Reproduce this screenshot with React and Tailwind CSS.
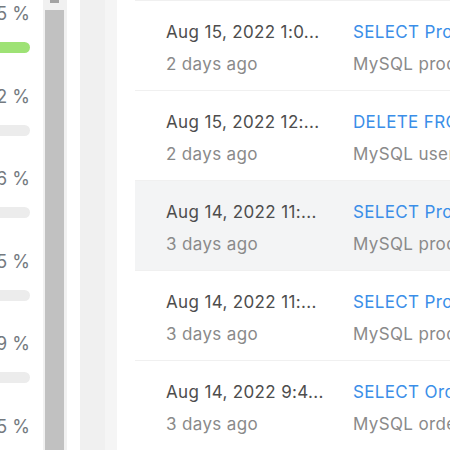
const stats = ['35 %', '42 %', '16 %', '25 %', '19 %', '15 %'];

const logs = [
  { date: 'Aug 15, 2022 1:0...', ago: '2 days ago', sql: 'SELECT Products FROM products', desc: 'MySQL products query' },
  { date: 'Aug 15, 2022 12:...', ago: '2 days ago', sql: 'DELETE FROM users', desc: 'MySQL users query' },
  { date: 'Aug 14, 2022 11:...', ago: '3 days ago', sql: 'SELECT Products FROM products', desc: 'MySQL products query', active: true },
  { date: 'Aug 14, 2022 11:...', ago: '3 days ago', sql: 'SELECT Products FROM products', desc: 'MySQL products query' },
  { date: 'Aug 14, 2022 9:4...', ago: '3 days ago', sql: 'SELECT Orders FROM orders', desc: 'MySQL orders query' },
];

export default function App() {
  return (
    <div
      className="flex h-[450px] w-[450px] overflow-hidden bg-white"
      style={{ fontFamily: 'Inter, "Noto Sans", sans-serif' }}
    >
      {/* usage list, scrolled so only the right edge shows */}
      <div className="-ml-[70px] w-[100px] shrink-0">
        {stats.map((s, i) => (
          <div key={i} className="pt-[2px] pb-[29.5px]">
            <div className="flex justify-end text-[18px] leading-6 text-[#747a80] whitespace-nowrap">{s}</div>
            <div className={`mt-[16px] h-[11px] rounded-full ${i === 0 ? 'bg-[#9ee275]' : 'bg-[#ececec]'}`} />
          </div>
        ))}
      </div>
      <div className="w-[13px] shrink-0" />

      {/* scrollbar */}
      <div className="flex w-[24px] shrink-0 flex-col bg-[#f1f1f1] pl-[2px] pr-[3px]">
        <div className="ml-[5px] h-[3px] w-[9px] bg-[#a3a3a3]" />
        <div className="mt-[7px] flex-1 bg-[#c1c1c1]" />
      </div>

      <div className="w-[13px] shrink-0" />
      <div className="w-[25px] shrink-0 bg-[#f0f0f0]" />
      <div className="w-[12px] shrink-0 bg-[#f5f5f5]" />

      {/* log table */}
      <div className="min-w-0 flex-1 pl-[18px]">
        <div className="border-t border-[#f0f0f0]">
          {logs.map((log, i) => (
            <div
              key={i}
              className={`flex h-[90px] items-center border-b border-[#f0f0f0] pt-[4px] text-[17px] leading-6 tracking-[0.35px] ${log.active ? 'bg-[#f3f4f5]' : ''}`}
            >
              <div className="w-[218px] shrink-0 pl-[31px]">
                <div className="text-[#4d4d4d] whitespace-nowrap">{log.date}</div>
                <div className="mt-2 text-[#8a8a8a] whitespace-nowrap">{log.ago}</div>
              </div>
              <div className="min-w-0">
                <div className="text-[#3a8ee8] whitespace-nowrap">{log.sql}</div>
                <div className="mt-2 text-[#8a8a8a] whitespace-nowrap">{log.desc}</div>
              </div>
            </div>
          ))}
        </div>
      </div>
    </div>
  );
}
